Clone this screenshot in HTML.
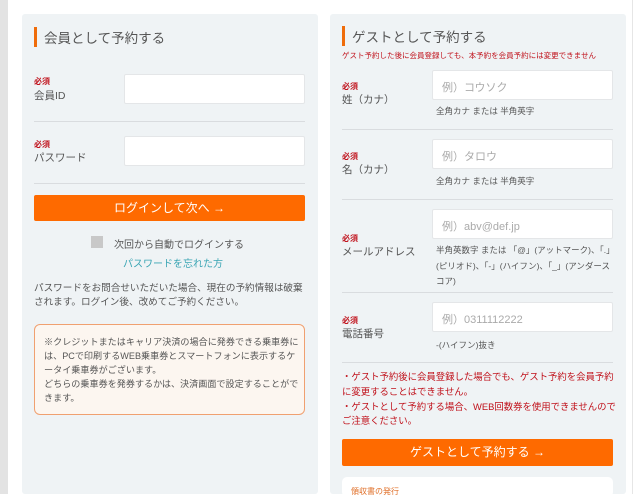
<!DOCTYPE html><html><head><meta charset="utf-8"><style>
*{margin:0;padding:0;box-sizing:border-box}
body{width:640px;height:494px;overflow:hidden;background:#fff;font-family:"Liberation Sans","Noto Sans CJK JP",sans-serif;color:#444;position:relative}
.a{position:absolute;white-space:nowrap}
.strip{position:absolute;left:0;top:0;width:8px;height:494px;background:#e3e3e3}
.rstrip{position:absolute;left:632px;top:0;width:1px;height:494px;background:#e6e6e6}
.panel{position:absolute;top:14px;height:480px;background:#eff3f5;border-radius:3px}
.bar{position:absolute;width:3px;height:20px;background:#ef6c0a}
.ttl{font-size:13.5px;color:#555}
.req{font-size:8px;color:#c0111b;font-weight:bold}
.lbl{font-size:10.5px;color:#555}
.inp{position:absolute;background:#fff;border:1px solid #e4e6e8;border-radius:2px;height:30px}
.ph{font-size:11px;color:#aaa;position:absolute;left:9px;top:8px;white-space:nowrap}
.hr{position:absolute;height:1px;background:#d9dcdf}
.btn{position:absolute;background:#fe6a00;color:#fff;font-size:12px;text-align:center;border-radius:2px}
.hint{font-size:8.5px;color:#555}
</style></head><body>
<div class="strip"></div><div class="rstrip"></div>
<div class="panel" style="left:22px;width:296px"></div>
<div class="panel" style="left:330px;width:296px"></div>

<div class="bar" style="left:34px;top:27px"></div>
<div class="a ttl" style="left:44px;top:27px">会員として予約する</div>
<div class="a req" style="left:34px;top:76px">必須</div>
<div class="a lbl" style="left:34px;top:88px">会員ID</div>
<div class="inp" style="left:124px;top:74px;width:181px"></div>
<div class="hr" style="left:34px;top:121px;width:271px"></div>
<div class="a req" style="left:34px;top:139px">必須</div>
<div class="a lbl" style="left:34px;top:150px">パスワード</div>
<div class="inp" style="left:124px;top:136px;width:181px"></div>
<div class="hr" style="left:34px;top:183px;width:271px"></div>
<div class="btn" style="left:34px;top:195px;width:271px;height:26px;line-height:26px">ログインして次へ →</div>
<div class="a" style="left:91px;top:236px;width:12px;height:12px;background:#c8c8c8"></div>
<div class="a" style="left:114px;top:236px;font-size:10px;color:#555">次回から自動でログインする</div>
<div class="a" style="left:123px;top:255px;font-size:10px;color:#3aa5b4">パスワードを忘れた方</div>
<div class="a" style="left:34px;top:282px;font-size:9.6px;line-height:14px;color:#555;white-space:normal;width:275px">パスワードをお問合せいただいた場合、現在の予約情報は破棄されます。ログイン後、改めてご予約ください。</div>
<div class="a" style="left:34px;top:324px;width:271px;height:91px;border:1px solid #f0a070;border-radius:6px;background:#fcf6f0"></div>
<div class="a" style="left:44px;top:335px;width:258px;font-size:9.1px;line-height:14px;color:#555;white-space:normal">※クレジットまたはキャリア決済の場合に発券できる乗車券には、PCで印刷するWEB乗車券とスマートフォンに表示するケータイ乗車券がございます。<br>どちらの乗車券を発券するかは、決済画面で設定することができます。</div>

<div class="bar" style="left:342px;top:26px"></div>
<div class="a ttl" style="left:352px;top:26px">ゲストとして予約する</div>
<div class="a" style="left:342px;top:50px;font-size:7.5px;color:#c0111b">ゲスト予約した後に会員登録しても、本予約を会員予約には変更できません</div>

<div class="a req" style="left:342px;top:81px">必須</div>
<div class="a lbl" style="left:342px;top:92px">姓（カナ）</div>
<div class="inp" style="left:432px;top:70px;width:181px"><span class="ph">例）コウソク</span></div>
<div class="a hint" style="left:436px;top:105px">全角カナ または 半角英字</div>
<div class="hr" style="left:342px;top:129px;width:271px"></div>

<div class="a req" style="left:342px;top:151px">必須</div>
<div class="a lbl" style="left:342px;top:162px">名（カナ）</div>
<div class="inp" style="left:432px;top:139px;width:181px"><span class="ph">例）タロウ</span></div>
<div class="a hint" style="left:436px;top:175px">全角カナ または 半角英字</div>
<div class="hr" style="left:342px;top:199px;width:271px"></div>

<div class="inp" style="left:432px;top:209px;width:181px"><span class="ph">例）abv@def.jp</span></div>
<div class="a req" style="left:342px;top:233px">必須</div>
<div class="a lbl" style="left:342px;top:244px">メールアドレス</div>
<div class="a hint" style="left:436px;top:243px;width:178px;line-height:15.5px;white-space:normal">半角英数字 または 「@」(アットマーク)、「.」(ピリオド)、「-」(ハイフン)、「_」(アンダースコア)</div>
<div class="hr" style="left:342px;top:292px;width:271px"></div>

<div class="inp" style="left:432px;top:302px;width:181px"><span class="ph">例）0311112222</span></div>
<div class="a req" style="left:342px;top:315px">必須</div>
<div class="a lbl" style="left:342px;top:326px">電話番号</div>
<div class="a hint" style="left:436px;top:339px">-(ハイフン)抜き</div>
<div class="hr" style="left:342px;top:362px;width:271px"></div>

<div class="a" style="left:342px;top:370px;width:276px;font-size:9.4px;line-height:14.8px;color:#c0111b;white-space:normal">・ゲスト予約後に会員登録した場合でも、ゲスト予約を会員予約に変更することはできません。<br>・ゲストとして予約する場合、WEB回数券を使用できませんのでご注意ください。</div>
<div class="btn" style="left:342px;top:439px;width:271px;height:27px;line-height:27px">ゲストとして予約する →</div>
<div class="a" style="left:342px;top:477px;width:271px;height:20px;background:#fff;border-radius:5px"></div>
<div class="a" style="left:351px;top:486px;font-size:8px;color:#e0702a">領収書の発行</div>
</body></html>
